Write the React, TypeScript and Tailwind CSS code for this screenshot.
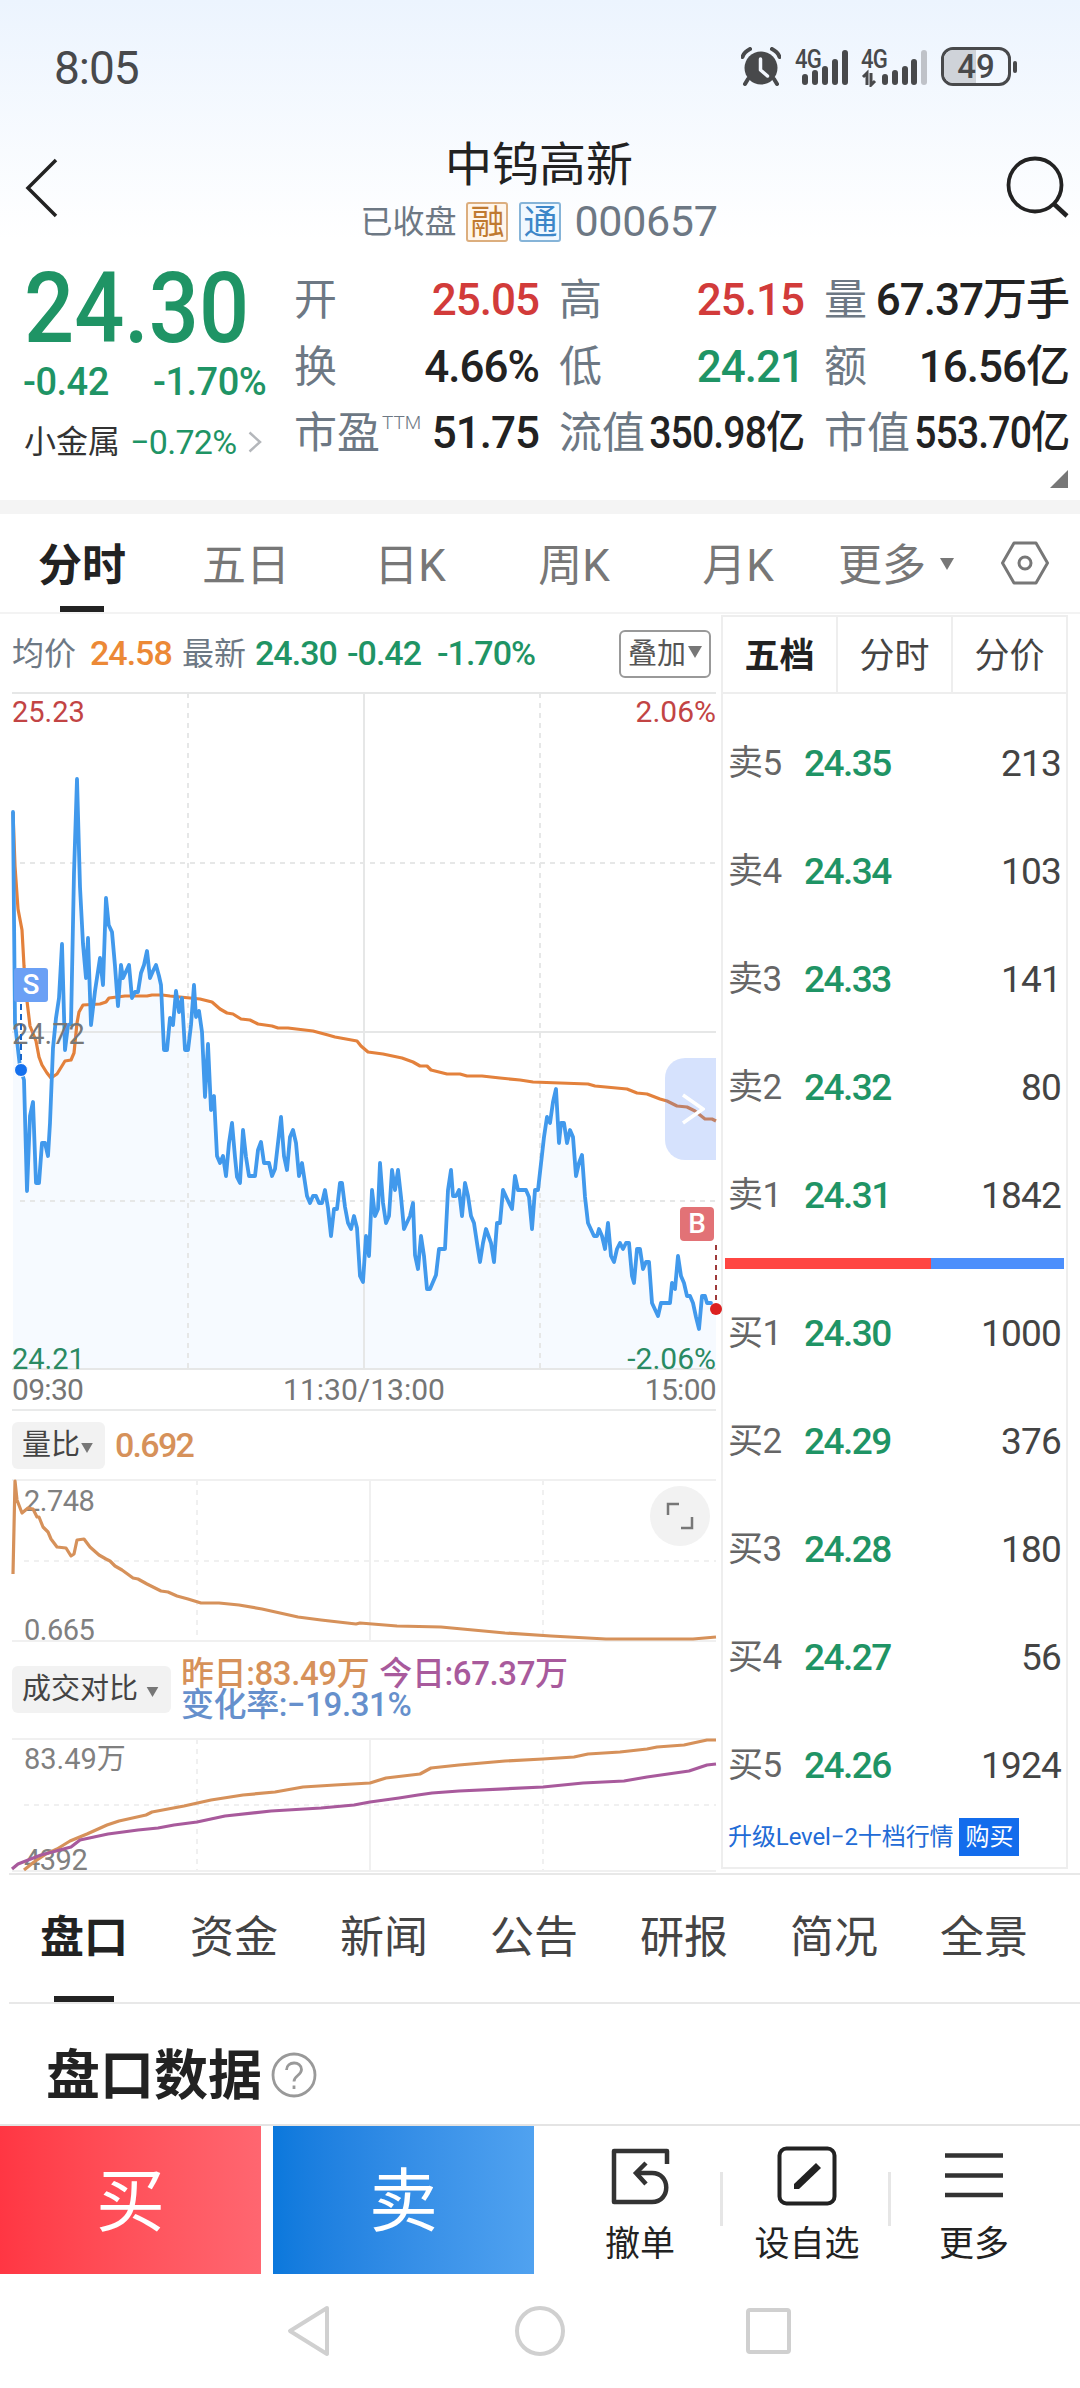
import React from 'react';

// --- Цвета котировок ---
const UP = 'text-[#d23b3a]';
const DOWN = 'text-[#1f9465]';
const INK = 'text-[#222]';

// --- Данные графиков: [x, y] на общей сетке экрана ---
const PRICE_POINTS =
  '13,812 15,1023 20,1067 24,1080 27,1191 30,1116 33,1102 36,1183 39,1183 42,1143 45,1143 48,1156 50,1123 53,1048 56,1018 59,998 62,944 65,1050 68,1025 71,1024 74,873 77,779 80,887 83,944 86,978 88,938 91,1025 95,991 100,958 103,985 106,898 108.7,925 112,932 115,966 118,1006 121,965 123,978 129,965 132,998 135,992 138,992 141,973 144,965 147,951 150,978 153,971 156,965 159,976 161,985 164,1050 167,1050 170,1018 173,1025 176,991 179,1012 182,998 185,1050 188,1050 191,1025 194,985 196,1017 199,1011 202,1032 205,1097 208,1044 211,1110 214,1096 217,1156 220,1163 223,1156 226,1176 229,1143 232,1123 235,1157 237,1177 240,1183 243,1130 246,1157 249,1176 255,1176 258,1150 261,1142 264,1163 269,1163 272,1176 275,1169 278,1143 281,1117 284,1156 287,1170 290,1137 293,1130 296,1143 299,1176 302,1163 307,1196 310,1203 313,1196 316,1196 319,1203 322,1203 325,1190 328,1208 331,1236 334,1209 337,1209 340,1183 342,1183 345,1207 348,1223 351,1229 354,1216 357,1228 360,1276 363,1282 366,1236 369,1256 372,1190 375,1216 378,1209 380,1163 383,1203 386,1223 389,1216 392,1170 395,1190 398,1170 401,1197 404,1229 410,1216 413,1203 415,1255 418,1269 421,1236 424,1256 427,1289 430,1289 436,1275 439,1249 445,1249 448,1190 451,1170 453,1196 456,1196 459,1190 462,1216 465,1183 468,1196 471,1216 474,1223 477,1243 480,1262 483,1243 486,1229 491,1243 494,1262 497,1223 500,1223 503,1190 509,1203 512,1209 515,1176 518,1190 526,1190 529,1197 532,1229 535,1190 538,1190 544,1137 547,1117 550,1123 553,1102 556,1089 559,1143 561,1123 564,1123 567,1143 570,1130 573,1137 576,1176 579,1163 582,1155 585,1197 588,1223 594,1236 597,1236 599,1229 602,1236 605,1249 608,1223 611,1256 614,1262 617,1249 620,1243 623,1249 626,1243 629,1243 632,1276 634,1283 637,1249 640,1249 643,1269 646,1262 649,1262 652,1303 658,1316 661,1303 670,1303 672,1283 675,1289 678,1256 681,1276 684,1283 687,1296 690,1296 693,1303 696,1317 699,1329 702,1296 705,1296 707,1303 711,1303';

const AVG_POINTS =
  '13,812 15,866 18,909 22,930 24,966 27,1001 30,1026 36,1041 39,1057 42,1065 47,1073 51,1078 57,1074 65,1061 71,1060 74,1053 77,1023 79,1012 83,1005 100,1004 106,1002 109,998 125,996 147,996 152,995 162,995 170,996 200,999 212,1002 220,1009 227,1013 233,1014 241,1019 250,1020 258,1024 272,1026 278,1028 288,1028 313,1031 328,1035 335,1037 357,1041 361,1046 368,1052 383,1054 402,1058 413,1062 420,1066 427,1066 431,1070 447,1074 460,1074 467,1076 482,1076 500,1078 520,1080 533,1082 560,1083 588,1084 595,1086 627,1089 637,1093 647,1094 660,1099 667,1101 677,1106 687,1107 695,1111 705,1119 712,1119 716,1121';

const RATIO_POINTS =
  '13,1574 15,1481 17,1500 22,1513 28,1508 33,1509 37,1517 39,1517 43,1527 48,1532 51,1539 57,1547 66,1548 71,1556 74,1554 77,1540 84,1539 90,1547 99,1555 106,1559 110,1561 115,1566 122,1570 133,1578 138,1579 147,1584 161,1591 168,1592 177,1596 188,1599 201,1603 219,1603 239,1605 262,1609 298,1617 321,1620 356,1624 360,1623 397,1626 441,1627 505,1633 551,1636 606,1639 693,1639 716,1637';

const YESTERDAY_POINTS =
  '24,1870 34,1862 46,1854 57,1849 70,1841 87,1834 107,1825 119,1821 146,1815 152,1812 184,1806 211,1800 243,1795 275,1792 303,1787 335,1785 370,1783 386,1778 420,1774 431,1768 459,1765 505,1761 543,1759 574,1757 588,1754 620,1752 647,1749 657,1747 684,1745 707,1740 716,1740';

const TODAY_POINTS =
  '12,1869 18,1864 41,1855 71,1847 80,1840 108,1834 138,1830 158,1828 174,1825 197,1822 225,1816 271,1811 321,1808 354,1805 370,1802 399,1798 418,1795 432,1793 459,1791 543,1787 583,1783 624,1781 647,1777 689,1771 707,1765 716,1764';

interface StatItem {
  label: string;
  sup?: string;
  value: string;
  color: string;
  tight?: boolean;
}

const STATS: StatItem[][] = [
  [
    { label: '开', value: '25.05', color: UP },
    { label: '换', value: '4.66%', color: INK },
    { label: '市盈', sup: 'TTM', value: '51.75', color: INK },
  ],
  [
    { label: '高', value: '25.15', color: UP },
    { label: '低', value: '24.21', color: DOWN },
    { label: '流值', value: '350.98亿', color: INK, tight: true },
  ],
  [
    { label: '量', value: '67.37万手', color: INK },
    { label: '额', value: '16.56亿', color: INK },
    { label: '市值', value: '553.70亿', color: INK, tight: true },
  ],
];

const ASKS = [
  ['卖5', '24.35', '213'],
  ['卖4', '24.34', '103'],
  ['卖3', '24.33', '141'],
  ['卖2', '24.32', '80'],
  ['卖1', '24.31', '1842'],
];

const BIDS = [
  ['买1', '24.30', '1000'],
  ['买2', '24.29', '376'],
  ['买3', '24.28', '180'],
  ['买4', '24.27', '56'],
  ['买5', '24.26', '1924'],
];

const Caret = ({ className }: { className: string }) => (
  <svg viewBox="0 0 14 12" className={className} fill="#777">
    <path d="M0 0h14L7 12z" />
  </svg>
);

// --- Строка состояния телефона ---
const StatusBar = () => (
  <div className="flex items-start justify-between h-[130px] pl-[54px] pr-[63px] pt-[47px] text-[#48494b]">
    <div className="text-[46px] leading-[42px] tracking-[-1px]">8:05</div>
    <div className="flex items-start h-10">
      <svg viewBox="0 0 40 40" className="w-10 h-10 mr-3.5" fill="#48494b">
        <circle cx="20" cy="21" r="16.500" />
        <path d="M7 32l-3 5M33 32l3 5M1.500 10Q3 5 9 2M38.500 10Q37 5 31 2" stroke="#48494b" strokeWidth="4" fill="none" strokeLinecap="round" />
        <path d="M19.500 12v11l7 6" stroke="#f3f7fe" strokeWidth="3.500" fill="none" strokeLinecap="round" strokeLinejoin="round" />
      </svg>
      <div className="relative w-[54px] h-10 mr-3">
        <span className="absolute left-0 top-0 text-[26px] leading-6 font-medium tracking-[-1px] origin-left scale-x-[0.85]">4G</span>
        <svg viewBox="0 0 54 40" className="absolute left-0 top-0 w-[54px] h-10" stroke="#48494b" strokeWidth="6" strokeLinecap="round">
          <path d="M10 30v5M20 26v9M30 22v13M40 15v20M50 6v29" />
        </svg>
      </div>
      <div className="relative w-[66px] h-10 mr-3.5">
        <span className="absolute left-0 top-0 text-[26px] leading-6 font-medium tracking-[-1px] origin-left scale-x-[0.85]">4G</span>
        <svg viewBox="0 0 66 40" className="absolute left-0 top-0 w-[66px] h-10" stroke="#48494b" strokeWidth="6" strokeLinecap="round">
          <path d="M24 30v5M34 26v9M44 22v13M53 15v20" />
          <path d="M63 6v29" stroke="#bfc2c8" />
          <path d="M2 30l4-4v12M10 26v12l4-4" strokeWidth="3" fill="none" strokeLinecap="butt" />
        </svg>
      </div>
      <div className="flex items-center">
        <div className="relative flex items-center justify-center w-[70px] h-[39px] rounded-xl border-[3px] border-[#48494b] overflow-hidden">
          <div className="absolute inset-y-0 left-0 w-8 bg-[#cfd3d9]" />
          <span className="relative text-[33px] leading-none font-medium">49</span>
        </div>
        <div className="w-1 h-3 ml-0.5 rounded-sm bg-[#48494b]" />
      </div>
    </div>
  </div>
);

// --- Шапка ---
const Header = () => (
  <div className="flex items-start justify-between h-[124px] pl-6 pr-2.5">
    <svg viewBox="0 0 36 60" className="w-9 h-[60px] mt-7" fill="none" stroke="#222" strokeWidth="3.500">
      <path d="M32 2L4 30l28 28" />
    </svg>
    <div className="flex flex-col items-center pl-3">
      <h1 className="pt-px text-[47px] leading-[67px] text-[#222]">中钨高新</h1>
      <div className="flex items-center h-12 text-[#6d7884]">
        <span className="text-[32px] mr-2.5">已收盘</span>
        <span className="flex items-center justify-center w-[42px] h-[40px] mr-[11px] rounded-[3px] border-2 border-[#dcae7e] bg-[#fff6ec] text-[34px] text-[#c07a30]">融</span>
        <span className="flex items-center justify-center w-[42px] h-[40px] mr-[13px] rounded-[3px] border-2 border-[#86b4d8] bg-[#f0f8ff] text-[34px] text-[#3c86c8]">通</span>
        <span className="text-[43px] leading-none tracking-[-0.300px] -mt-0.5">000657</span>
      </div>
    </div>
    <svg viewBox="0 0 64 64" className="w-16 h-16 mt-[26px]" fill="none" stroke="#222" strokeWidth="3.800">
      <circle cx="29" cy="29" r="26.500" />
      <path d="M48 48l13 12" strokeWidth="4.500" />
    </svg>
  </div>
);

// --- Котировка ---
const Quote = () => (
  <section className="relative flex h-[246px]">
    <div className="w-[294px] pl-6">
      <div className={`mt-[10px] h-[90px] text-[98px] leading-[90px] font-medium origin-left scale-x-[0.9] ${DOWN}`}>24.30</div>
      <div className={`flex mt-[8px] -ml-px text-[38px] leading-[40px] font-medium whitespace-nowrap ${DOWN}`}>
        <span className="w-[130px] tracking-[-0.500px]">-0.42</span>
        <span className="tracking-[-0.500px]">-1.70%</span>
      </div>
      <div className="flex items-center mt-[18px] h-[44px] text-[32px] whitespace-nowrap">
        <span className="text-[#333]">小金属</span>
        <span className={`ml-2.5 text-[34px] tracking-[-0.700px] ${DOWN}`}>−0.72%</span>
        <svg viewBox="0 0 14 22" className="w-3.5 h-[22px] ml-3" fill="none" stroke="#b4b7bb" strokeWidth="2.500">
          <path d="M1.500 1.500L12 11 1.500 20.500" />
        </svg>
      </div>
    </div>
    <div className="flex pt-[13px] gap-[18px]">
      {STATS.map((column, i) => (
        <div key={i} className="w-[247px] pr-0.5">
          {column.map((item) => (
            <div key={item.label} className="flex items-center justify-between h-[66.600px] whitespace-nowrap">
              <span className="flex items-start text-[43px] leading-[60px] text-[#6d7884]">
                {item.label}
                {item.sup && <sup className="text-[19px] leading-[60px] top-[-10px] ml-0.5 font-light">{item.sup}</sup>}
              </span>
              <span className={`text-[44px] font-medium origin-right tracking-[-1px] ${item.tight ? 'scale-x-[0.89] -ml-8' : ''} ${item.color}`}>{item.value}</span>
            </div>
          ))}
        </div>
      ))}
    </div>
    <svg viewBox="0 0 18 18" className="absolute right-3 bottom-3 w-[18px] h-[18px]" fill="#777">
      <path d="M18 0v18H0z" />
    </svg>
  </section>
);

// --- Вкладки периода ---
const PeriodTabs = () => (
  <div className="flex items-center h-[100px] text-[44px] text-[#777] border-b-2 border-[#f3f3f3]">
    {['分时', '五日', '日K', '周K', '月K'].map((tab, i) => (
      <div key={tab} className={`relative flex items-center justify-center w-[164px] h-full pt-[5px] ${i === 0 ? 'font-bold text-[#222]' : ''}`}>
        {tab}
        {i === 0 && <span className="absolute bottom-0 w-11 h-1.5 bg-[#222]" />}
      </div>
    ))}
    <div className="flex items-center ml-[18px] pt-[5px]">
      更多
      <Caret className="w-3.5 h-3 ml-3.5 mb-1" />
    </div>
    <svg viewBox="0 0 48 44" className="w-12 h-11 ml-[47px]" fill="none" stroke="#777" strokeWidth="3">
      <path d="M13 2h22l11.500 20L35 42H13L1.500 22z" strokeLinejoin="round" />
      <circle cx="24" cy="22" r="6" />
    </svg>
  </div>
);

// --- График цены ---
const PriceChart = () => (
  <div className="relative h-[676px]">
    <svg viewBox="12 693 704 676" className="w-[704px] h-[676px] overflow-visible" fill="none">
      <polygon points={`13,1369 ${PRICE_POINTS} 716,1309 716,1369`} fill="#f6faff" />
      <g stroke="#e6e7e7" strokeWidth="2">
        <path d="M12 693H716M12 1032H716M12 1369H716M364 693V1369" />
        <path d="M20 863H716M20 1201H716M188 693V1369M540 693V1369" strokeDasharray="5 5" />
      </g>
      <polyline points={AVG_POINTS} stroke="#e3813c" strokeWidth="3.200" strokeLinejoin="round" />
      <polyline points={PRICE_POINTS} stroke="#4199ec" strokeWidth="3.800" strokeLinejoin="round" strokeLinecap="round" />
    </svg>
    <span className="absolute left-0 top-[1px] text-[29px] leading-9 text-[#c24444]">25.23</span>
    <span className="absolute right-0 top-[1px] text-[30px] leading-9 text-[#c24444]">2.06%</span>
    <span className="absolute left-0 top-[323px] text-[29px] leading-9 text-[#777]">24.72</span>
    <span className="absolute left-0 bottom-[-8px] text-[29px] leading-9 text-[#2a8a63]">24.21</span>
    <span className="absolute right-0 bottom-[-8px] text-[30px] leading-9 text-[#2a8a63]">-2.06%</span>
    <svg viewBox="12 693 704 676" className="absolute inset-0 w-[704px] h-[676px] overflow-visible" fill="none">
      <path d="M21 1004V1062" stroke="#1765c9" strokeWidth="2" strokeDasharray="6 4" />
      <circle cx="21" cy="1070" r="6.500" fill="#1470ee" stroke="#fff" />
      <path d="M716 1245V1302" stroke="#9e3a3a" strokeWidth="2" strokeDasharray="5 5" />
      <circle cx="716" cy="1309" r="6" fill="#dc2020" />
    </svg>
    <span className="absolute left-0.5 top-[275px] flex items-center justify-center w-[34px] h-[34px] rounded-[3px] bg-[#6ba0f5] text-[28px] font-medium text-white">S</span>
    <span className="absolute right-0.5 top-[514px] flex items-center justify-center w-[34px] h-[34px] rounded-[4px] bg-[#e27276] text-[28px] font-medium text-white">B</span>
    <div className="absolute right-0 top-[365px] flex items-center justify-center w-[51px] h-[102px] rounded-l-[20px] bg-[#4d80f5]/23">
      <svg viewBox="0 0 24 32" className="w-6 h-8 ml-1" fill="none" stroke="#fff" strokeWidth="3.500">
        <path d="M2 2l20 14L2 30" />
      </svg>
    </div>
  </div>
);

const LeftPanel = () => (
  <div className="w-[704px]">
    <div className="flex items-center h-[79px] text-[32px] text-[#6d7884] whitespace-nowrap">
      <span>均价</span>
      <span className="w-[76px] ml-[14px] text-[34px] font-medium tracking-[-1px] text-[#ec8936]">24.58</span>
      <span className="ml-4">最新</span>
      <span className={`flex ml-[9px] text-[34px] font-medium tracking-[-1px] ${DOWN}`}>
        <span className="w-[92px]">24.30</span>
        <span className="w-[90px]">-0.42</span>
        <span>-1.70%</span>
      </span>
      <button className="flex items-center justify-center w-[92px] h-[48px] ml-auto mr-[5px] rounded-md border-2 border-[#999] text-[29px] text-[#555]">
        <span className="pt-0.5">叠加</span>
        <Caret className="w-3.5 h-3 ml-0.5 mb-1" />
      </button>
    </div>
    <PriceChart />
    <div className="flex justify-between h-[42px] pt-[6px] border-b-2 border-[#e9eaea] text-[30px] leading-[30px] text-[#757575]">
      <span className="tracking-[-0.700px]">09:30</span>
      <span>11:30/13:00</span>
      <span className="tracking-[-0.700px]">15:00</span>
    </div>
    <div className="flex items-center h-[69px]">
      <button className="flex items-center h-[47px] w-[93px] pl-2.5 rounded-md bg-[#f2f2f2] text-[29px] text-[#444] whitespace-nowrap">
        量比
        <Caret className="w-3 h-2.5 mt-1 ml-[1px] shrink-0" />
      </button>
      <span className="ml-2.5 text-[34px] font-medium tracking-[-1.700px] text-[#d6915a]">0.692</span>
    </div>
    <div className="relative h-[161px]">
      <span className="absolute left-3 top-[3px] text-[29px] leading-9 tracking-[-0.500px] text-[#808080]">2.748</span>
      <span className="absolute left-3 bottom-[-7px] text-[29px] leading-9 tracking-[-0.500px] text-[#808080]">0.665</span>
      <svg viewBox="12 1480 704 161" className="relative w-[704px] h-[161px] overflow-visible" fill="none">
        <g stroke="#f0f0f0" strokeWidth="2">
          <path d="M12 1480H716M12 1641H716M370 1480V1641" />
          <path d="M24 1561H716M197 1480V1641M543 1480V1641" strokeDasharray="5 5" />
        </g>
        <polyline points={RATIO_POINTS} stroke="#d6915a" strokeWidth="3.200" strokeLinejoin="round" />
      </svg>
      <button className="absolute right-1.5 top-[6px] flex items-center justify-center w-[60px] h-[60px] rounded-full bg-[#f2f2f2]">
        <svg viewBox="0 0 28 28" className="w-7 h-7" fill="none" stroke="#777" strokeWidth="2.500">
          <path d="M2 13V2h11M26 15v11H15" />
        </svg>
      </button>
    </div>
    <div className="flex h-[98px] pt-[14px]">
      <button className="flex items-center w-[159px] h-[47px] mt-[11px] pl-2.5 rounded-md bg-[#f2f2f2] text-[29px] text-[#444] whitespace-nowrap">
        成交对比
        <Caret className="w-[13px] h-2.5 mt-1 ml-2 shrink-0" />
      </button>
      <div className="ml-[10px] pt-[3px] text-[33px] leading-[31px] font-medium tracking-[-0.400px] whitespace-nowrap">
        <div className="flex gap-[10px]">
          <span className="text-[#d6915a]">昨日:83.49万</span>
          <span className="text-[#a85a9c]">今日:67.37万</span>
        </div>
        <div className="text-[#6690cc]">变化率:−19.31%</div>
      </div>
    </div>
    <div className="relative h-[132px]">
      <span className="absolute left-3 top-[2px] text-[29px] leading-9 text-[#808080]">83.49万</span>
      <span className="absolute left-3 bottom-[-7px] text-[29px] leading-9 tracking-[-0.500px] text-[#808080]">4392</span>
      <svg viewBox="12 1739 704 132" className="relative w-[704px] h-[132px] overflow-visible" fill="none">
        <g stroke="#f0f0f0" strokeWidth="2">
          <path d="M12 1739H716M12 1871H716M370 1739V1871" />
          <path d="M24 1805H716M197 1739V1871M543 1739V1871" strokeDasharray="5 5" />
        </g>
        <polyline points={YESTERDAY_POINTS} stroke="#d6915a" strokeWidth="3.200" strokeLinejoin="round" />
        <polyline points={TODAY_POINTS} stroke="#a85a9c" strokeWidth="3.200" strokeLinejoin="round" />
      </svg>
    </div>
  </div>
);

// --- Стакан ---
const OrderRow = ({ row }: { row: string[] }) => (
  <div className="flex items-center h-[108px] pl-[5px] pr-[5px] text-[37px]">
    <span className="w-[76px] text-[35px] tracking-[-0.500px] text-[#666]">{row[0]}</span>
    <span className={`font-medium tracking-[-1.500px] ${DOWN}`}>{row[1]}</span>
    <span className="ml-auto tracking-[-0.800px] text-[#444]">{row[2]}</span>
  </div>
);

const OrderBook = () => (
  <div className="w-[347px] h-[1254px] mt-[1px] border-2 border-[#eee]">
    <div className="flex h-[77px] border-b-2 border-[#eee] text-[35px] text-[#444]">
      <div className="flex flex-1 items-center justify-center pt-[5px] font-bold text-[#222]">五档</div>
      <div className="flex flex-1 items-center justify-center pt-[5px] border-x-2 border-[#eee]">分时</div>
      <div className="flex flex-1 items-center justify-center pt-[5px]">分价</div>
    </div>
    <div className="pt-[16px]">
      {ASKS.map((row) => <OrderRow key={row[0]} row={row} />)}
    </div>
    <div className="flex h-[11px] mt-[8px] mx-0.5">
      <div className="w-[206px] bg-[#ff4642]" />
      <div className="flex-1 bg-[#4c8ffc]" />
    </div>
    <div className="pt-[11px]">
      {BIDS.map((row) => <OrderRow key={row[0]} row={row} />)}
    </div>
    <div className="flex items-center h-[38px] -mt-[2px] pl-[5px] text-[24px] tracking-[-0.100px] whitespace-nowrap text-[#226bd6]">
      升级Level−2十档行情
      <button className="w-[60px] h-[38px] ml-1.5 bg-[#136cec] text-white">购买</button>
    </div>
  </div>
);

// --- Нижние вкладки ---
const InfoTabs = () => (
  <div className="flex h-[131px] ml-[9px] border-y-2 border-[#e8e8e8] text-[44px] text-[#444]">
    {['盘口', '资金', '新闻', '公告', '研报', '简况', '全景'].map((tab, i) => (
      <div key={tab} className={`relative flex justify-center w-[150px] pt-[30px] ${i === 0 ? 'font-bold text-[#222]' : ''}`}>
        {tab}
        {i === 0 && <span className="absolute bottom-0 w-[60px] h-1.5 bg-[#222]" />}
      </div>
    ))}
  </div>
);

const TradeBar = () => (
  <div className="flex h-[150px] border-t-2 border-[#e4e4e4] text-[#222]">
    <button className="w-[261px] pt-[5px] bg-linear-to-r from-[#ff3643] to-[#ff6670] text-[69px] leading-none text-white">买</button>
    <button className="w-[261px] pt-[5px] ml-3 bg-linear-to-r from-[#0a78dc] to-[#50a2f0] text-[69px] leading-none text-white">卖</button>
    <div className="flex flex-1 pl-[23px] pr-[23px] text-[35px]">
      <div className="relative flex flex-col items-center w-[166px] pt-[20px]">
        <svg viewBox="0 0 60 60" className="w-[60px] h-[60px]" fill="none" stroke="#333" strokeWidth="4.500">
          <path d="M57 18V5H4v51h38c19 0 19-29 0-29H27" strokeLinejoin="round" />
          <path d="M36 17L26 27l10 11" />
        </svg>
        <span className="leading-[52px] pt-[13px]">撤单</span>
        <span className="absolute right-0 top-[46px] w-[3px] h-[54px] bg-[#e6e6e6]" />
      </div>
      <div className="relative flex flex-col items-center w-[168px] pt-[20px]">
        <svg viewBox="0 0 60 60" className="w-[60px] h-[60px]" fill="none" stroke="#222" strokeWidth="4">
          <rect x="2.500" y="2.500" width="55" height="55" rx="7" />
          <path d="M17 43v-5l22-21 5 5-22 21z" fill="#222" stroke="none" />
        </svg>
        <span className="leading-[52px] pt-[13px]">设自选</span>
        <span className="absolute right-0 top-[46px] w-[3px] h-[54px] bg-[#e6e6e6]" />
      </div>
      <div className="flex flex-col items-center w-[166px] pt-[20px]">
        <svg viewBox="0 0 60 60" className="w-[60px] h-[60px]" stroke="#333" strokeWidth="4.500">
          <path d="M1 9.500h58M1 29.500h58M1 49h58" />
        </svg>
        <span className="leading-[52px] pt-[13px]">更多</span>
      </div>
    </div>
  </div>
);

const SystemNav = () => (
  <div className="flex items-center h-[114px] pl-[284px]">
    <svg viewBox="0 0 508 56" className="w-[508px] h-14" fill="none" stroke="#d0d0d0" strokeWidth="4">
      <path d="M43 5L6 28l37 23z" strokeLinejoin="round" />
      <circle cx="256" cy="28" r="23" />
      <rect x="464" y="7" width="41" height="42" rx="2" />
    </svg>
  </div>
);

export default function App() {
  return (
    <div className="flex flex-col w-[1080px] h-[2388px] overflow-hidden bg-white bg-[linear-gradient(#ecf4fe_0px,#ffffff_240px)] font-[Roboto,'Noto_Sans_CJK_SC',sans-serif]">
      <StatusBar />
      <Header />
      <Quote />
      <div className="h-[14px] bg-[#f4f4f4]" />
      <PeriodTabs />
      <main className="flex gap-[5px] h-[1259px] pl-3">
        <LeftPanel />
        <OrderBook />
      </main>
      <InfoTabs />
      <section className="flex items-center h-[120px] pt-[25px] pl-[46px]">
        <h2 className="text-[54px] leading-[60px] font-bold text-[#222]">盘口数据</h2>
        <svg viewBox="0 0 46 46" className="w-[46px] h-[46px] ml-[9px] mb-1" fill="none" stroke="#999" strokeWidth="2.800">
          <circle cx="23" cy="23" r="21" />
          <path d="M15.500 18c0-9 15-9.500 15-.500 0 6-7.500 6-7.500 12M23 33.500v3.500" />
        </svg>
      </section>
      <TradeBar />
      <SystemNav />
    </div>
  );
}
